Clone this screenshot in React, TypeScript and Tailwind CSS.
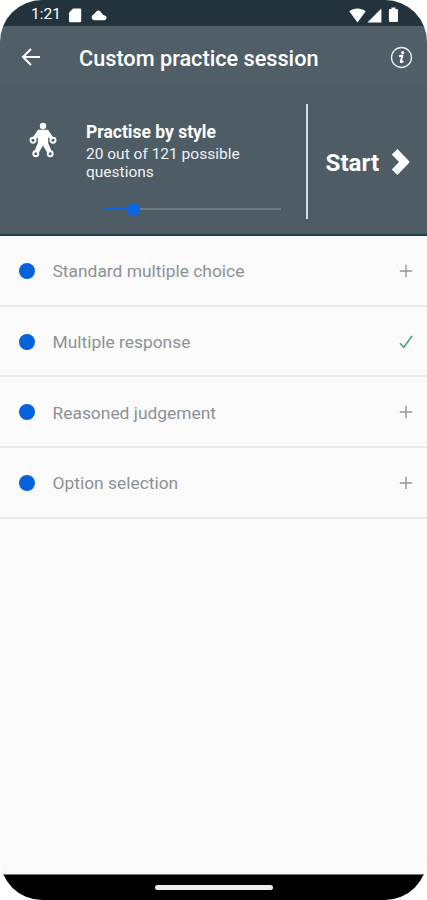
interface QuestionStyle {
  id: string
  label: string
  selected: boolean
}

const QUESTION_STYLES: QuestionStyle[] = [
  { id: 'standard', label: 'Standard multiple choice', selected: false },
  { id: 'response', label: 'Multiple response', selected: true },
  { id: 'judgement', label: 'Reasoned judgement', selected: false },
  { id: 'option', label: 'Option selection', selected: false },
]

const TOTAL_QUESTIONS = 121
const SELECTED_QUESTIONS = 20

function StatusBar() {
  return (
    <div className="flex h-[26px] shrink-0 items-center bg-[#22333d] pt-1 pr-7 pl-[31px] text-white">
      <span className="w-[30px] text-[15.5px] leading-none">1:21</span>
      <svg className="ml-[7px] h-[15px] w-[14px]" viewBox="0 0 14 15" fill="currentColor">
        <path d="M5 0.5h7.2q1 0 1 1v11.7q0 1-1 1H2q-1 0-1-1V4.8z" />
      </svg>
      <svg className="ml-[9px] h-[11px] w-4" viewBox="0 0 16 11" fill="currentColor">
        <path d="M3 10.2a2.9 2.9 0 0 1-.4-5.6L5.4 1.4Q7.3-.3 9.3 1.4L12 4.8l2.2.9a2.4 2.4 0 0 1-.7 4.5z" />
      </svg>
      <div className="ml-auto flex items-center">
        <svg className="h-[15px] w-[17px]" viewBox="0 0 17 15" fill="currentColor">
          <path d="M.3 3.3C5 -.3 12 -.3 16.7 3.3L8.5 14.5z" />
        </svg>
        <svg className="ml-[1px] h-[15px] w-[15px]" viewBox="0 0 15 15" fill="currentColor">
          <path d="M14.4.4v14H.4z" />
        </svg>
        <svg className="ml-[6px] h-[16px] w-[11px]" viewBox="0 0 11 16" fill="currentColor">
          <path d="M3.4.5h4V2h1.4q1.2 0 1.2 1.2v10.6q0 1.2-1.2 1.2H2.1Q.9 15 .9 13.8V3.2Q.9 2 2.1 2h1.3z" />
        </svg>
      </div>
    </div>
  )
}

function AppBar() {
  return (
    <header className="flex h-[60px] shrink-0 items-center bg-[#4f5e67] pr-[14px] pl-[21px] text-white">
      <button type="button" aria-label="Back" className="mt-[2px]">
        <svg
          className="h-5 w-5"
          viewBox="0 0 20 20"
          fill="none"
          stroke="currentColor"
          strokeWidth="2"
        >
          <path d="M19 10H2.5M10 2L2 10l8 8" />
        </svg>
      </button>
      <h1 className="mt-[5px] ml-[38px] text-[21.7px] leading-none font-medium whitespace-nowrap">
        Custom practice session
      </h1>
      <button type="button" aria-label="Info" className="mt-[3px] ml-auto">
        <svg className="h-[23px] w-[23px]" viewBox="0 0 23 23" fill="none">
          <circle cx="11.5" cy="11.5" r="10" stroke="#e8edf0" strokeWidth="1.3" />
          <circle cx="12.7" cy="6.5" r="1.6" fill="#fff" />
          <path
            d="M9 10.2l3.4-.6-1.6 6q-.2 1.4 2.6-.6"
            stroke="#fff"
            strokeWidth="2"
            strokeLinejoin="round"
          />
        </svg>
      </button>
    </header>
  )
}

function BodyIcon() {
  return (
    <svg className="h-9 w-7" viewBox="0 0 28 36">
      <g fill="#fff">
        <circle cx="14" cy="4" r="3.2" />
        <path d="M9 7.8h10l5.9 8.6-2.6 2-3.1-3.5v6.3l4 9.2-4.2 1.6L14 23.6 9 32l-4.2-1.6 4-9.2v-6.3l-3.1 3.5-2.6-2z" />
      </g>
      <g fill="#4f5e67" stroke="#fff" strokeWidth="1.9">
        <circle cx="4" cy="18.2" r="2.5" />
        <circle cx="24" cy="18.2" r="2.5" />
        <circle cx="6.8" cy="31.7" r="2.5" />
        <circle cx="21.2" cy="31.7" r="2.5" />
      </g>
    </svg>
  )
}

function SessionPanel() {
  const percent = (SELECTED_QUESTIONS / TOTAL_QUESTIONS) * 100

  return (
    <section className="flex h-[150px] shrink-0 border-b-2 border-[#1f3c49] bg-[#4d5c65] text-white">
      <div className="w-[86px] shrink-0 pt-[36px] pl-[29px]">
        <BodyIcon />
      </div>
      <div className="w-[220px] shrink-0 pt-[37px]">
        <h2 className="text-[17.5px] leading-[19px] font-bold whitespace-nowrap">
          Practise by style
        </h2>
        <p className="mt-[3px] w-[180px] text-[15.5px] leading-[18px] text-[#eef1f3]">
          {`${SELECTED_QUESTIONS} out of ${TOTAL_QUESTIONS} possible questions`}
        </p>
        <div className="relative mt-[27px] ml-[18px] h-[2px] w-[177px] bg-[#6b7b85]">
          <div className="h-full bg-[#0867e0]" style={{ width: `${percent}%` }} />
          <span
            className="absolute -top-[5.5px] -ml-[6.5px] h-[13px] w-[13px] rounded-full bg-[#0867e0]"
            style={{ left: `${percent}%` }}
          />
        </div>
      </div>
      <div className="mt-[18px] h-[115px] w-[2px] bg-[#d3dce2]" />
      <button type="button" className="flex flex-1 items-center pt-1 pl-[17.5px]">
        <span className="mt-[2px] text-[24.2px] leading-none font-bold">Start</span>
        <svg className="ml-[12px] h-7 w-[19px]" viewBox="0 0 19 28" fill="currentColor">
          <path d="M6.4.9L18.2 13.2q.8.8 0 1.6L6.4 27.1.8 21.6 8 14 .8 6.4z" />
        </svg>
      </button>
    </section>
  )
}

function StyleRow({ label, selected }: QuestionStyle) {
  return (
    <li className="flex h-[70.7px] items-center border-b-2 border-[#e8e9ea] pt-[1.5px] pr-[14px] pl-[18.5px]">
      <span className="h-4 w-4 rounded-full bg-[#0562dc]" />
      <span className="mt-[2px] ml-[18px] text-[17.4px] leading-none whitespace-nowrap text-[#8c9297]">
        {label}
      </span>
      <svg className="ml-auto h-[14px] w-[14px]" viewBox="0 0 14 14" fill="none">
        {selected ? (
          <path d="M1 8.3l3.8 4L13 1" stroke="#42a577" strokeWidth="1.5" />
        ) : (
          <path d="M7 .8v12.4M.8 7h12.4" stroke="#939698" strokeWidth="1.4" />
        )}
      </svg>
    </li>
  )
}

export default function App() {
  return (
    <div className="h-[900px] w-[427px] bg-white font-['Roboto',sans-serif]">
      <div className="flex h-full flex-col overflow-hidden rounded-[42px] bg-[#fafafa]">
        <StatusBar />
        <AppBar />
        <SessionPanel />
        <ul className="flex-1">
          {QUESTION_STYLES.map((style) => (
            <StyleRow key={style.id} {...style} />
          ))}
        </ul>
        <div className="flex h-[26px] shrink-0 justify-center border-t border-[#777] bg-black pt-[10px]">
          <div className="h-[5px] w-[118px] rounded-full bg-[#eee]" />
        </div>
      </div>
    </div>
  )
}
